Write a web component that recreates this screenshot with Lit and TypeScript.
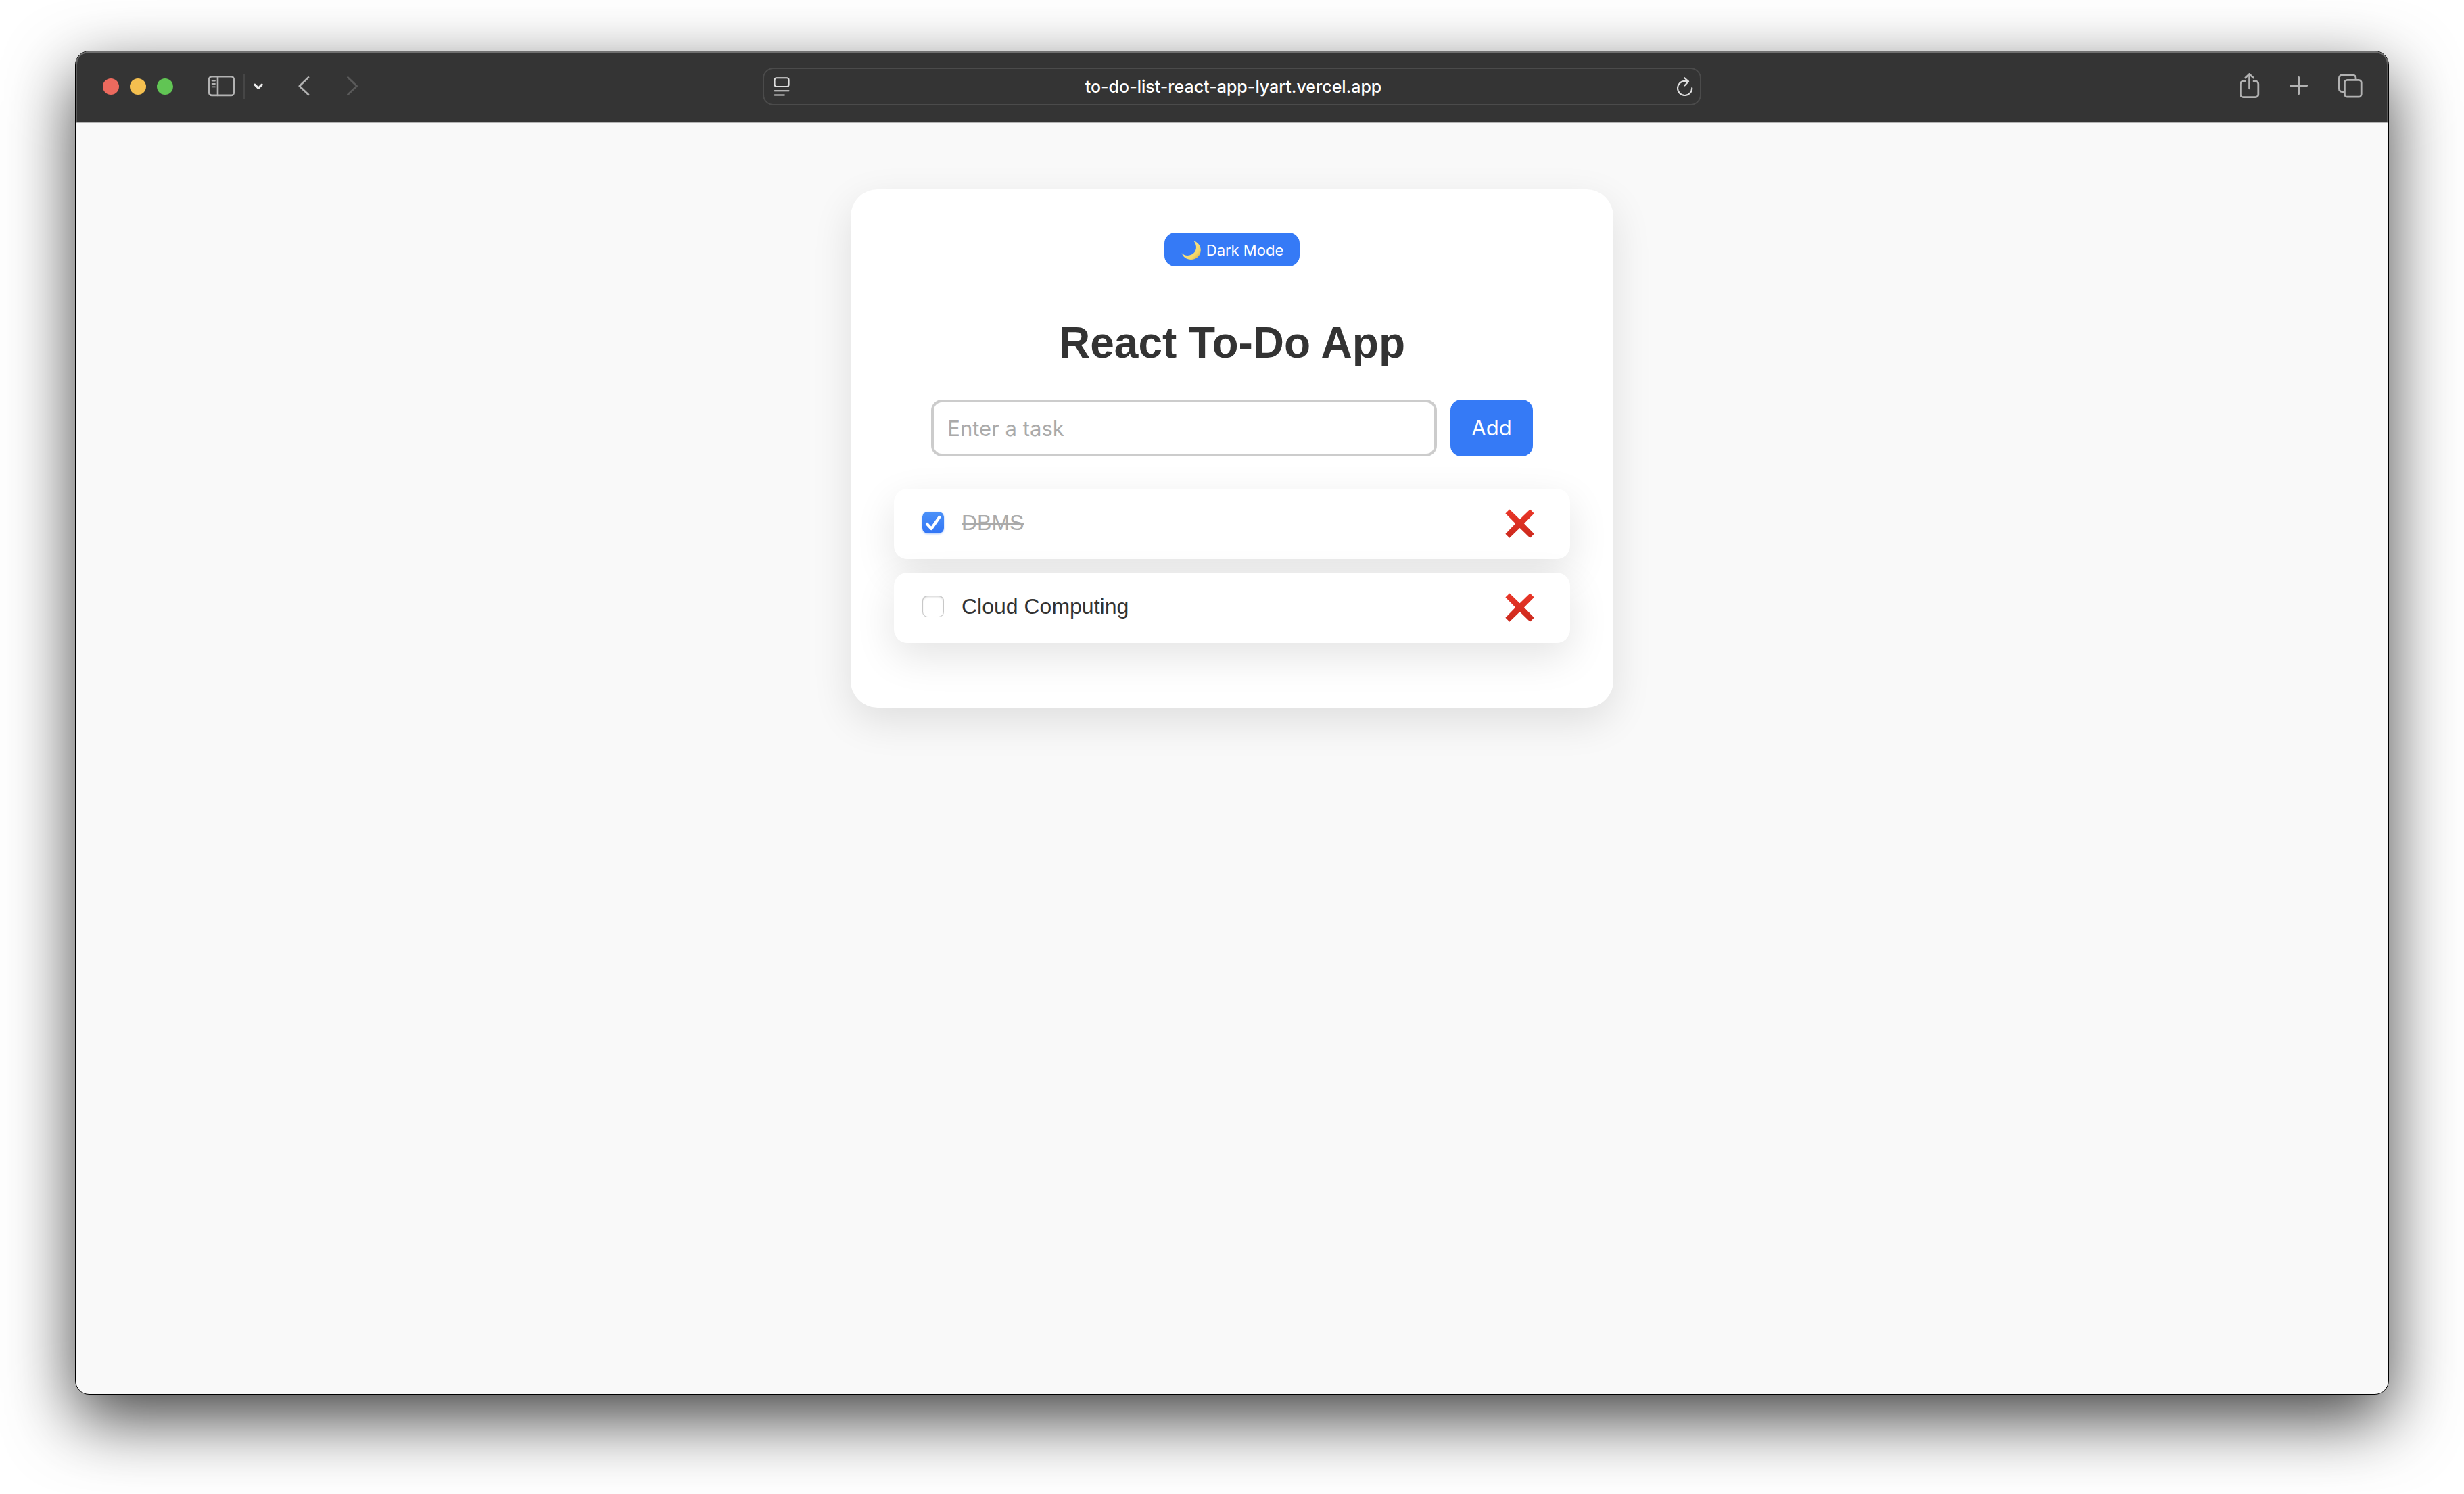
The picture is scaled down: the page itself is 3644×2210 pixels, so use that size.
import { LitElement, html, css } from "lit";
import { customElement, property, state } from "lit/decorators.js";
import { classMap } from "lit/directives/class-map.js";

interface Task {
  id: number;
  text: string;
  done: boolean;
}

const buttonReset = css`
  *,
  *::before,
  *::after {
    box-sizing: border-box;
  }
  button {
    display: flex;
    align-items: center;
    justify-content: center;
    margin: 0;
    padding: 0;
    border: 0;
    background: none;
    color: inherit;
    font: inherit;
    cursor: pointer;
  }
  svg {
    display: block;
    fill: none;
    stroke: currentColor;
    stroke-linecap: round;
    stroke-linejoin: round;
  }
`;

@customElement("browser-toolbar")
class BrowserToolbar extends LitElement {
  @property() address = "";

  static styles = [
    buttonReset,
    css`
      :host {
        display: grid;
        grid-template-columns: 1fr minmax(0, 1388px) 1fr;
        align-items: center;
        height: 104px;
        background: #343434;
        color: #b2b2b2;
        border-radius: 20px 20px 0 0;
        box-shadow: inset 0 2px 0 #707070, inset 2px 0 0 #5c5c5c,
          inset -2px 0 0 #5c5c5c;
      }
      .left,
      .right,
      .lights,
      .sidebar,
      .nav {
        display: flex;
        align-items: center;
      }
      .left {
        padding-left: 40px;
      }
      .lights {
        gap: 16px;
      }
      .light {
        width: 24px;
        height: 24px;
        border-radius: 50%;
      }
      .close {
        background: #ec6a5e;
      }
      .minimise {
        background: #f4bf4f;
      }
      .zoom {
        background: #61c554;
      }
      .sidebar {
        gap: 12px;
        margin-left: 52px;
      }
      .divider {
        width: 2px;
        height: 36px;
        background: #464646;
      }
      .menu {
        color: #ececec;
      }
      .nav {
        gap: 52px;
        margin-left: 50px;
      }
      .forward:disabled {
        color: #5a5a5a;
      }
      .address {
        display: flex;
        align-items: center;
        height: 56px;
        padding: 0 10px 0 14px;
        border: 2px solid #4b4b4b;
        border-radius: 16px;
        color: #dedede;
      }
      .url {
        flex: 1;
        min-width: 0;
        padding: 0;
        border: 0;
        outline: 0;
        background: none;
        color: #fff;
        font: 500 25px/32px Inter, "Liberation Sans", sans-serif;
        text-align: center;
      }
      .right {
        justify-content: flex-end;
        gap: 42px;
        padding-right: 38px;
      }
    `,
  ];

  render() {
    return html`
      <div class="left">
        <div class="lights">
          <button class="light close" aria-label="Close"></button>
          <button class="light minimise" aria-label="Minimise"></button>
          <button class="light zoom" aria-label="Zoom"></button>
        </div>
        <div class="sidebar">
          <button aria-label="Sidebar">
            <svg width="40" height="32" viewBox="0 0 40 32" stroke-width="2.6">
              <rect x="1.2" y="1.3" width="36.6" height="27.6" rx="4" />
              <path d="M14 1.3v27.6" />
              <path d="M5.6 7.6h4.4M5.6 12h4.4M5.6 16.4h4.4" stroke-width="1.8" />
            </svg>
          </button>
          <span class="divider"></span>
          <button class="menu" aria-label="Tab groups">
            <svg width="16" height="16" viewBox="0 0 16 16" stroke-width="3.2">
              <path d="M2.8 5.2 8 10.4l5.2-5.2" />
            </svg>
          </button>
        </div>
        <div class="nav">
          <button aria-label="Back">
            <svg width="20" height="32" viewBox="0 0 20 32" stroke-width="2.8">
              <path d="M16 2.4 2.8 15.2 16 27.8" />
            </svg>
          </button>
          <button class="forward" aria-label="Forward" disabled>
            <svg width="20" height="32" viewBox="0 0 20 32" stroke-width="2.8">
              <path d="M2.4 2.4 15.6 15.2 2.4 27.8" />
            </svg>
          </button>
        </div>
      </div>
      <div class="address">
        <button aria-label="Page menu">
          <svg width="24" height="28" viewBox="0 0 24 28" stroke-width="2">
            <rect x="1.6" y="1.2" width="21" height="12.8" rx="3" />
            <path d="M1.6 20.2h21M1.6 26.6H16" />
          </svg>
        </button>
        <input class="url" aria-label="Address" .value=${this.address} />
        <button aria-label="Reload">
          <svg width="24" height="28" viewBox="0 0 24 28" stroke-width="2.2">
            <path d="M22.2 16.2A10.6 10.6 0 1 1 11.6 5.8H16" />
            <path d="M11.2 1.2 17 6.4l-5.6 6" />
          </svg>
        </button>
      </div>
      <div class="right">
        <button aria-label="Share">
          <svg width="32" height="40" viewBox="0 0 32 40" stroke-width="2.8">
            <path
              d="M11.4 12H7.6A4.2 4.2 0 0 0 3.4 16.2V31.4A4.2 4.2 0 0 0 7.6 35.6H25.6A4.2 4.2 0 0 0 29.8 31.4V16.2A4.2 4.2 0 0 0 25.6 12H21.8"
              stroke-linecap="butt"
            />
            <path d="M16.6 22.8V1.8M10.8 7 16.6 1.4 22.4 7" />
          </svg>
        </button>
        <button aria-label="New tab">
          <svg width="32" height="32" viewBox="0 0 32 32" stroke-width="2.8">
            <path d="M15.6 2.4V26.8M3.4 14.6H27.8" />
          </svg>
        </button>
        <button aria-label="Tab overview">
          <svg width="36" height="38" viewBox="0 0 36 38" stroke-width="2.8">
            <rect x="9.4" y="9.4" width="24.8" height="24.8" rx="4" />
            <path
              d="M9.4 26.6H5.6A4.2 4.2 0 0 1 1.4 22.4V6.2A4.2 4.2 0 0 1 5.6 2H21.8A4.2 4.2 0 0 1 26 6.2V9.4"
              stroke-linecap="butt"
            />
          </svg>
        </button>
      </div>
    `;
  }
}

@customElement("todo-item")
class TodoItem extends LitElement {
  @property({ attribute: false }) task!: Task;

  static styles = [
    buttonReset,
    css`
      :host {
        display: block;
      }
      .item {
        display: flex;
        align-items: center;
        justify-content: space-between;
        height: 104px;
        padding: 0 42px;
        border-radius: 20px;
        background: #fff;
        box-shadow: 0 20px 60px rgba(0, 0, 0, 0.11);
      }
      .label {
        display: flex;
        align-items: center;
        gap: 26px;
        padding-bottom: 4px;
        font-size: 32px;
        line-height: 36px;
        color: #333;
      }
      .box {
        display: grid;
      }
      .box > * {
        grid-area: 1 / 1;
      }
      .check {
        appearance: none;
        width: 32px;
        height: 32px;
        margin: 0;
        border-radius: 8px;
        background: #fff;
        box-shadow: inset 0 0 0 1px #c8c8c8, inset 0 2px 3px rgba(0, 0, 0, 0.18);
      }
      .check:checked {
        background: linear-gradient(#4b91f8, #3275f6);
        box-shadow: 0 1px 3px rgba(53, 122, 246, 0.4);
      }
      .tick {
        color: #fff;
        pointer-events: none;
      }
      .done .text {
        color: #aaa;
        text-decoration: line-through;
      }
      .remove {
        padding: 10px;
      }
      .remove svg {
        stroke: none;
      }
    `,
  ];

  private emit(name: string) {
    this.dispatchEvent(new CustomEvent(name, { detail: this.task.id }));
  }

  render() {
    const { text, done } = this.task;
    return html`
      <div class="item">
        <label class=${classMap({ label: true, done })}>
          <span class="box">
            <input
              class="check"
              type="checkbox"
              .checked=${done}
              @change=${() => this.emit("toggle-task")}
            />
            ${done
              ? html`<svg class="tick" width="32" height="32" viewBox="0 0 32 32" stroke-width="4.2">
                  <path d="M7 18 13.4 25 25.2 8" />
                </svg>`
              : null}
          </span>
          <span class="text">${text}</span>
        </label>
        <button
          class="remove"
          aria-label=${`Delete ${text}`}
          @click=${() => this.emit("remove-task")}
        >
          <svg width="44" height="44" viewBox="0 0 44 44">
            <defs>
              <linearGradient id="red" x1="0" y1="0" x2="0" y2="1">
                <stop offset="0" stop-color="#ea3628" />
                <stop offset="1" stop-color="#cb291d" />
              </linearGradient>
            </defs>
            <path
              fill="url(#red)"
              d="M6.4 .4 21.6 15.2 36.8 .4 42.8 6.4 28 21.6 42.8 36.8 36.8 42.8 21.6 28 6.4 42.8 .4 36.8 15.2 21.6 .4 6.4Z"
            />
          </svg>
        </button>
      </div>
    `;
  }
}

@customElement("app-root")
class AppRoot extends LitElement {
  @state() private tasks: Task[] = [
    { id: 1, text: "DBMS", done: true },
    { id: 2, text: "Cloud Computing", done: false },
  ];
  @state() private draft = "";

  static styles = [
    buttonReset,
    css`
      :host {
        display: flex;
        box-sizing: border-box;
        min-height: 100vh;
        padding: 75px 111px 147px;
        overflow: hidden;
        background: #fff;
        font-family: "Liberation Sans", Arial, sans-serif;
      }
      .window {
        flex: 1;
        display: flex;
        flex-direction: column;
        min-width: 0;
        border: 1px solid #000;
        border-radius: 21px;
        background: #f9f9f9;
        box-shadow: 0 36px 100px rgba(0, 0, 0, 0.74);
      }
      .page {
        flex: 1;
        display: flex;
        justify-content: center;
        align-items: flex-start;
        padding: 99px 40px 40px;
        border-top: 1px solid #000;
        box-shadow: inset 0 1px 0 #b4b4b4;
      }
      .card {
        display: flex;
        flex-direction: column;
        flex: 0 1 1128px;
        min-width: 0;
        padding: 64px 64px 96px;
        border-radius: 40px;
        background: #fff;
        box-shadow: 0 20px 60px rgba(0, 0, 0, 0.11);
      }
      .theme {
        align-self: center;
        gap: 8px;
        height: 50px;
        padding: 2px 24px 0;
        border-radius: 16px;
        background: #357af6;
        color: #fff;
        font: 400 22px/28px Inter, "Liberation Sans", sans-serif;
      }
      .theme svg {
        stroke: none;
      }
      .title {
        margin: 77px 0 48px;
        color: #333;
        font-size: 64px;
        line-height: 72px;
        font-weight: 700;
        text-align: center;
      }
      .form {
        display: flex;
        justify-content: center;
        gap: 20px;
        margin-bottom: 48px;
        font: 400 31px/40px Inter, "Liberation Sans", sans-serif;
      }
      .field {
        flex: 0 1 748px;
        min-width: 0;
        height: 84px;
        padding: 0 20px;
        border: 4px solid #ccc;
        border-radius: 16px;
        outline: 0;
        background: #fff;
        color: #333;
        font: inherit;
      }
      .field::placeholder {
        color: #aaa;
        opacity: 1;
      }
      .add {
        height: 84px;
        padding: 0 31px;
        border-radius: 16px;
        background: #357af6;
        color: #fff;
      }
      .list {
        display: flex;
        flex-direction: column;
        gap: 20px;
        margin: 0;
        padding: 0;
        list-style: none;
      }
    `,
  ];

  private addTask(event: Event) {
    event.preventDefault();
    const text = this.draft.trim();
    if (!text) return;
    this.tasks = [...this.tasks, { id: Date.now(), text, done: false }];
    this.draft = "";
  }

  private toggle(event: CustomEvent<number>) {
    this.tasks = this.tasks.map((task) =>
      task.id === event.detail ? { ...task, done: !task.done } : task
    );
  }

  private remove(event: CustomEvent<number>) {
    this.tasks = this.tasks.filter((task) => task.id !== event.detail);
  }

  render() {
    return html`
      <div class="window">
        <browser-toolbar address="to-do-list-react-app-lyart.vercel.app"></browser-toolbar>
        <main class="page">
          <section class="card">
            <button class="theme">
              <svg width="30" height="30" viewBox="0 0 30 30" aria-hidden="true">
                <defs>
                  <linearGradient id="moon" x1="0.3" y1="0.3" x2="1" y2="1">
                    <stop offset="0" stop-color="#f7e58a" />
                    <stop offset="0.6" stop-color="#f3d76a" />
                    <stop offset="1" stop-color="#c9a03f" />
                  </linearGradient>
                </defs>
                <path
                  fill="url(#moon)"
                  d="M19.2 1C26 3.6 30 9 29.8 15.2 29.6 23 23.4 29 15.6 29 8.800 29 3.600 25 1.600 19.200 5 23 11 24.200 16.200 21.600 23.600 18 25.600 8.600 19.200 1Z"
                />
              </svg>
              Dark Mode
            </button>
            <h1 class="title">React To-Do App</h1>
            <form class="form" @submit=${this.addTask}>
              <input
                class="field"
                type="text"
                aria-label="Task"
                placeholder="Enter a task"
                .value=${this.draft}
                @input=${(e: Event) => (this.draft = (e.target as HTMLInputElement).value)}
              />
              <button class="add" type="submit">Add</button>
            </form>
            <ul class="list">
              ${this.tasks.map(
                (task) => html`<li>
                  <todo-item
                    .task=${task}
                    @toggle-task=${this.toggle}
                    @remove-task=${this.remove}
                  ></todo-item>
                </li>`
              )}
            </ul>
          </section>
        </main>
      </div>
    `;
  }
}
